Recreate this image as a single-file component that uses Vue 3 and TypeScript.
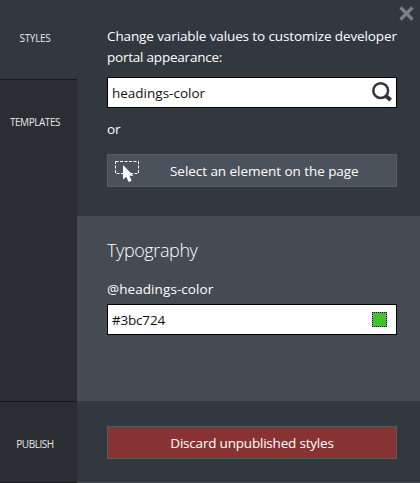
<script setup lang="ts">
import { ref } from 'vue'

const search = ref('headings-color')
const color = ref('#3bc724')
</script>

<template>
  <div class="designer">
    <nav class="sidebar">
      <a class="tab active"><span>STYLES</span></a>
      <a class="tab"><span>TEMPLATES</span></a>
      <a class="tab publish"><span>PUBLISH</span></a>
    </nav>
    <main class="panel">
      <section class="top">
        <svg class="close" viewBox="0 0 15 15"><path d="M1.5 1.5L13.5 13.5M13.5 1.5L1.5 13.5" stroke="#7c8084" stroke-width="3.2" /></svg>
        <p class="intro"><span>Change variable values to customize developer</span><br /><span class="line2">portal appearance:</span></p>
        <div class="field">
          <input v-model="search" class="i-search" type="text" />
          <svg class="magnifier" viewBox="0 0 22 21">
            <circle cx="9.7" cy="8.7" r="7.4" fill="none" stroke="#333436" stroke-width="2.5" />
            <path d="M14.2 13.4L16 15" fill="none" stroke="#333436" stroke-width="2.4" />
            <path d="M15.2 14.2L19.7 18" fill="none" stroke="#333436" stroke-width="3.8" />
          </svg>
        </div>
        <p class="or">or</p>
        <button class="select">
          <svg class="picker" viewBox="0 0 26 23">
            <rect x=".5" y="2.5" width="23" height="12" fill="none" stroke="#fff" stroke-dasharray="3 1.5" />
            <path d="M8 6V20.5L11.3 17.8L13.6 23L16.6 21.8L14.5 16.8H18.5Z" fill="#fff" />
          </svg>
          <span>Select an element on the page</span>
        </button>
      </section>
      <section class="middle">
        <h2><span>Typography</span></h2>
        <label><span>@headings-color</span></label>
        <div class="field">
          <input v-model="color" class="i-color" type="text" />
          <i class="swatch" :style="{ backgroundColor: color }"></i>
        </div>
      </section>
      <section class="footer">
        <button class="discard"><span>Discard unpublished styles</span></button>
      </section>
    </main>
  </div>
</template>

<style>
body { margin: 0; overflow: hidden; background: #323840; }
</style>
<style scoped>
* { box-sizing: border-box; }
.designer { display: flex; width: 420px; height: 483px; font-family: "Open Sans", "Noto Sans", sans-serif; font-size: 13.5px; font-weight: 500; color: #fff; white-space: nowrap; }
.sidebar { display: flex; flex: none; flex-direction: column; width: 77px; background: #2a2e32; }
.tab { height: 85px; display: flex; align-items: center; justify-content: center; font-size: 10px; font-weight: 400; letter-spacing: -.45px; color: #e4e7ea; padding-right: 7px; padding-bottom: 1px; }
.tab.active { height: 80px; background: #323840; border-bottom: 1px solid #16191c; padding-bottom: 4px; letter-spacing: -.3px; }
.tab.publish { margin-top: auto; height: 82px; border-top: 1px solid #16191c; border-bottom: 1px solid #16191c; padding-top: 4px; padding-bottom: 0; }
.panel { display: flex; flex-direction: column; flex: 1; min-width: 0; }
.top { position: relative; height: 216px; padding: 26px 23px 0 30px; background: #323840; }
.close { position: absolute; left: 322px; top: 6px; width: 15px; height: 15px; }
p { margin: 0; }
.intro { height: 51px; line-height: 21px; letter-spacing: -.11px; }
.line2 { letter-spacing: -.22px; }
.field { display: flex; align-items: center; width: 290px; height: 31px; background: #fff; border: 1px solid #000; }
input { flex: 1; min-width: 0; height: 29px; border: 0; outline: 0; padding: 0 0 0 4px; background: transparent; font: inherit; font-weight: 400; letter-spacing: 0; color: #111; }
.i-color { letter-spacing: -.2px; }
.magnifier { width: 22px; height: 21px; margin-right: 3px; }
.or { height: 46px; padding-top: 11px; line-height: 21px; }
button { display: flex; align-items: center; width: 290px; height: 33px; margin: 0; padding: 0; border: 1px solid #595d5b; font: inherit; color: #fff; }
.select { background: #4a525c; letter-spacing: -.05px; }
.picker { width: 26px; height: 23px; margin-left: 7px; margin-right: 29px; }
.middle { height: 185px; padding: 22px 23px 0 30px; background: #444b53; }
h2 { margin: 0; height: 40px; font-size: 18px; font-weight: 300; line-height: 24px; letter-spacing: -.4px; }
label { display: block; height: 26px; line-height: 22px; letter-spacing: .08px; }
.swatch { width: 15px; height: 15px; margin-right: 9px; border: 1px dotted #000; }
.footer { flex: 1; padding: 25px 23px 0 30px; background: #323840; border-bottom: 1px solid #444b53; }
.discard { justify-content: center; background: #883333; letter-spacing: -.2px; }
</style>
